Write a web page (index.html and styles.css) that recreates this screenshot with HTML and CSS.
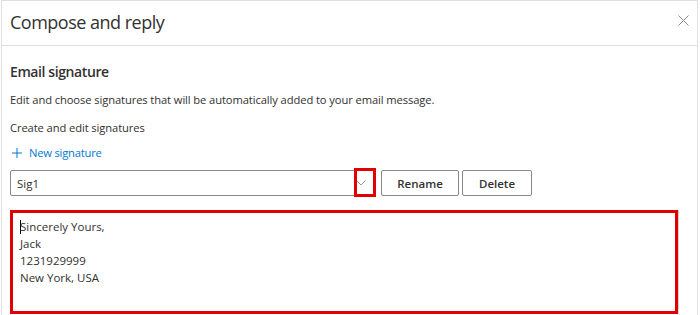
FILE: index.html
```html
<!DOCTYPE html>
<html lang="en">
<head>
<meta charset="utf-8">
<title>Compose and reply</title>
<link rel="stylesheet" href="styles.css">
</head>
<body>
<div class="panel">
  <div class="header">
    <h1 class="title">Compose and reply</h1>
    <button class="close" aria-label="Close">
      <svg width="11" height="11" viewBox="0 0 11 11"><path d="M0.5 0.5 L10.5 10.5 M10.5 0.5 L0.5 10.5" stroke="#8a8886" stroke-width="1" fill="none"/></svg>
    </button>
  </div>
  <div class="content">
    <h2 class="section">Email signature</h2>
    <p class="desc">Edit and choose signatures that will be automatically added to your email message.</p>
    <p class="label">Create and edit signatures</p>
    <a class="newsig"><span class="plus">
      <svg width="10" height="10" viewBox="0 0 10 10"><path d="M5 0 V10 M0 5 H10" stroke="#0078d4" stroke-width="1" fill="none"/></svg>
    </span>New signature</a>
    <div class="row">
      <div class="select">
        <span class="value">Sig1</span>
        <span class="chev">
          <svg width="10" height="6" viewBox="0 0 10 6"><path d="M0.5 0.5 L5 5 L9.5 0.5" stroke="#a19f9d" stroke-width="1" fill="none"/></svg>
        </span>
        <span class="mark"></span>
      </div>
      <button class="btn rename">Rename</button>
      <button class="btn delete">Delete</button>
    </div>
    <div class="editor">
      <div class="line"><span class="caret"></span>Sincerely Yours,</div>
      <div class="line">Jack</div>
      <div class="line">1231929999</div>
      <div class="line">New York, USA</div>
    </div>
  </div>
</div>
</body>
</html>
```
FILE: styles.css
```css
* { box-sizing: border-box; }
html, body { margin: 0; padding: 0; background: #ffffff; }
body {
  font-family: "Open Sans", "Noto Sans", Arial, sans-serif;
  color: #323130;
  width: 700px;
  height: 315px;
  overflow: hidden;
}
.panel {
  margin: 0 2px 0 1px;
  height: 330px;
  border: 1px solid #e1dfdd;
  border-bottom: none;
}
.header {
  height: 45px;
  border-bottom: 1px solid #e1dfdd;
  display: flex;
  align-items: center;
  justify-content: space-between;
  padding: 0 8px 0 8px;
}
.title {
  margin: 0;
  font-size: 18px;
  font-weight: 400;
  letter-spacing: -0.5px;
  color: #323130;
  line-height: 26px;
  padding-bottom: 2px;
}
.close {
  border: none;
  background: none;
  padding: 0;
  width: 11px;
  height: 11px;
  display: flex;
  margin-bottom: 6px;
}
.content {
  padding: 0 8px 0 8px;
}
.section {
  margin: 15px 0 0 0;
  font-size: 14px;
  font-weight: 600;
  line-height: 22px;
  letter-spacing: -0.4px;
}
.desc {
  margin: 9px 0 0 0;
  font-size: 11.2px;
  line-height: 16px;
  letter-spacing: -0.1px;
}
.label {
  margin: 12px 0 0 0;
  font-size: 11.2px;
  line-height: 16px;
  letter-spacing: -0.1px;
}
.newsig {
  margin-top: 9px;
  display: flex;
  align-items: center;
  color: #0078d4;
  font-size: 11.2px;
  line-height: 16px;
  letter-spacing: -0.2px;
}
.plus {
  display: flex;
  margin: 0 7px 0 2px;
}
.row {
  margin-top: 9px;
  display: flex;
  align-items: center;
  height: 26px;
}
.select {
  position: relative;
  width: 366px;
  height: 26px;
  border: 1px solid #8a8886;
  border-radius: 2px;
  display: flex;
  align-items: center;
  justify-content: space-between;
  padding: 0 8px 0 6px;
  font-size: 11.5px;
}
.chev {
  display: flex;
  margin-right: 1px;
}
.mark {
  position: absolute;
  right: -1px;
  top: -3px;
  width: 22px;
  height: 29px;
  border: 3px solid #e00000;
}
.btn {
  height: 26px;
  border: 1px solid #8a8886;
  border-radius: 2px;
  background: #ffffff;
  font-family: "Open Sans", "Noto Sans", Arial, sans-serif;
  font-weight: 600;
  font-size: 11.5px;
  color: #323130;
  padding: 0;
}
.rename { width: 78px; margin-left: 5px; }
.delete { width: 70px; margin-left: 3px; }
.editor {
  margin-top: 14px;
  width: 668px;
  height: 104px;
  border: 3px solid #e00000;
  box-shadow: 1px 0 0 #d2d0ce;
  padding: 5px 0 0 7px;
  font-size: 11.5px;
  line-height: 17px;
  color: #323130;
}
.line { position: relative; white-space: nowrap; }
.caret {
  display: inline-block;
  width: 1px;
  height: 14px;
  background: #000;
  vertical-align: -3px;
  margin-right: -1px;
}
```
